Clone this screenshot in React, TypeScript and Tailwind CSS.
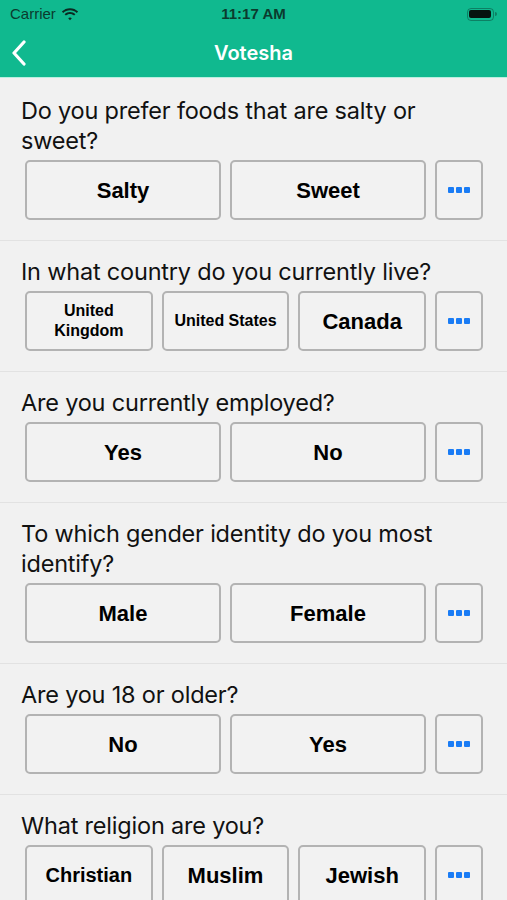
import React from "react";

type Question = {
  text: string;
  options: { label: string; size: string }[];
};

const questions: Question[] = [
  {
    text: "Do you prefer foods that are salty or sweet?",
    options: [
      { label: "Salty", size: "text-[22px]" },
      { label: "Sweet", size: "text-[22px]" },
    ],
  },
  {
    text: "In what country do you currently live?",
    options: [
      { label: "United Kingdom", size: "text-[16px] leading-[20px]" },
      { label: "United States", size: "text-[16px]" },
      { label: "Canada", size: "text-[22px]" },
    ],
  },
  {
    text: "Are you currently employed?",
    options: [
      { label: "Yes", size: "text-[22px]" },
      { label: "No", size: "text-[22px]" },
    ],
  },
  {
    text: "To which gender identity do you most identify?",
    options: [
      { label: "Male", size: "text-[22px]" },
      { label: "Female", size: "text-[22px]" },
    ],
  },
  {
    text: "Are you 18 or older?",
    options: [
      { label: "No", size: "text-[22px]" },
      { label: "Yes", size: "text-[22px]" },
    ],
  },
  {
    text: "What religion are you?",
    options: [
      { label: "Christian", size: "text-[20px]" },
      { label: "Muslim", size: "text-[22px]" },
      { label: "Jewish", size: "text-[22px]" },
    ],
  },
];

function StatusBar() {
  return (
    <div className="h-[28px] flex items-center justify-between px-[10px] text-[#0b3b2e] font-['Liberation_Sans',sans-serif]">
      <div className="flex items-center gap-[5px] w-[120px]">
        <span className="text-[15px]">Carrier</span>
        <svg width="18" height="13" viewBox="0 0 18 13" fill="#0b2a22">
          <path d="M9 2.2c2.6 0 5 1 6.8 2.7l1.3-1.4C14.9 1.4 12.1.2 9 .2S3.1 1.4.9 3.5l1.3 1.4C4 3.2 6.4 2.2 9 2.2z" />
          <path d="M9 6c1.6 0 3 .6 4.1 1.6l1.3-1.4C12.9 4.8 11 4 9 4s-3.9.8-5.4 2.2l1.3 1.4C6 6.6 7.4 6 9 6z" />
          <path d="M9 9.6c.7 0 1.3.2 1.8.6L9 12.2 7.2 10.2c.5-.4 1.1-.6 1.8-.6z" />
        </svg>
      </div>
      <span className="text-[15px] font-bold">11:17 AM</span>
      <div className="w-[120px] flex justify-end items-center">
        <div className="w-[27px] h-[13px] rounded-[4px] border border-[#0b2a22]/40 p-[1.5px]">
          <div className="w-full h-full rounded-[2px] bg-[#06130f]" />
        </div>
        <div className="w-[2px] h-[4px] bg-[#0b2a22]/40 rounded-r-sm ml-[1px]" />
      </div>
    </div>
  );
}

function NavBar() {
  return (
    <div className="h-[50px] relative flex items-center justify-center border-b border-[#b9efe0]">
      <svg className="absolute left-[11px] top-[12px]" width="16" height="26" viewBox="0 0 16 26" fill="none" stroke="white" strokeWidth="3.2" strokeLinecap="round" strokeLinejoin="round">
        <path d="M13 2 3 13l10 11" />
      </svg>
      <span className="text-white text-[20px] font-semibold font-['Inter',sans-serif]">Votesha</span>
    </div>
  );
}

function MoreButton() {
  return (
    <button className="w-[48px] h-[60px] shrink-0 rounded-[5px] border-2 border-[#b3b3b3] bg-[#f2f2f2] flex items-center justify-center gap-[2px]">
      <span className="w-[6px] h-[6px] rounded-[1px] bg-[#1a7cf5]" />
      <span className="w-[6px] h-[6px] rounded-[1px] bg-[#1a7cf5]" />
      <span className="w-[6px] h-[6px] rounded-[1px] bg-[#1a7cf5]" />
    </button>
  );
}

function QuestionRow({ q, first }: { q: Question; first: boolean }) {
  return (
    <div className="pl-[21px] border-b border-[#e2e2e2]">
      <div className={`${first ? "pt-[18px]" : "pt-[16px]"} pb-[20px] pr-[24px]`}>
        <p className="text-[23.5px] leading-[30px] text-[#111] font-['Inter',sans-serif] tracking-[-0.2px]">
          {q.text}
        </p>
        <div className="mt-[4px] pl-[4px] flex gap-[9px]">
          {q.options.map((o) => (
            <button
              key={o.label}
              className={`flex-1 h-[60px] rounded-[5px] border-2 border-[#b3b3b3] bg-[#f2f2f2] font-bold text-black font-['Liberation_Sans',sans-serif] px-[6px] ${o.size}`}
            >
              {o.label}
            </button>
          ))}
          <MoreButton />
        </div>
      </div>
    </div>
  );
}

export default function App() {
  return (
    <div className="w-[507px] h-[900px] overflow-hidden bg-[#f1f1f1]">
      <div className="bg-[#10b98f]">
        <StatusBar />
        <NavBar />
      </div>
      {questions.map((q, i) => (
        <QuestionRow key={q.text} q={q} first={i === 0} />
      ))}
    </div>
  );
}
